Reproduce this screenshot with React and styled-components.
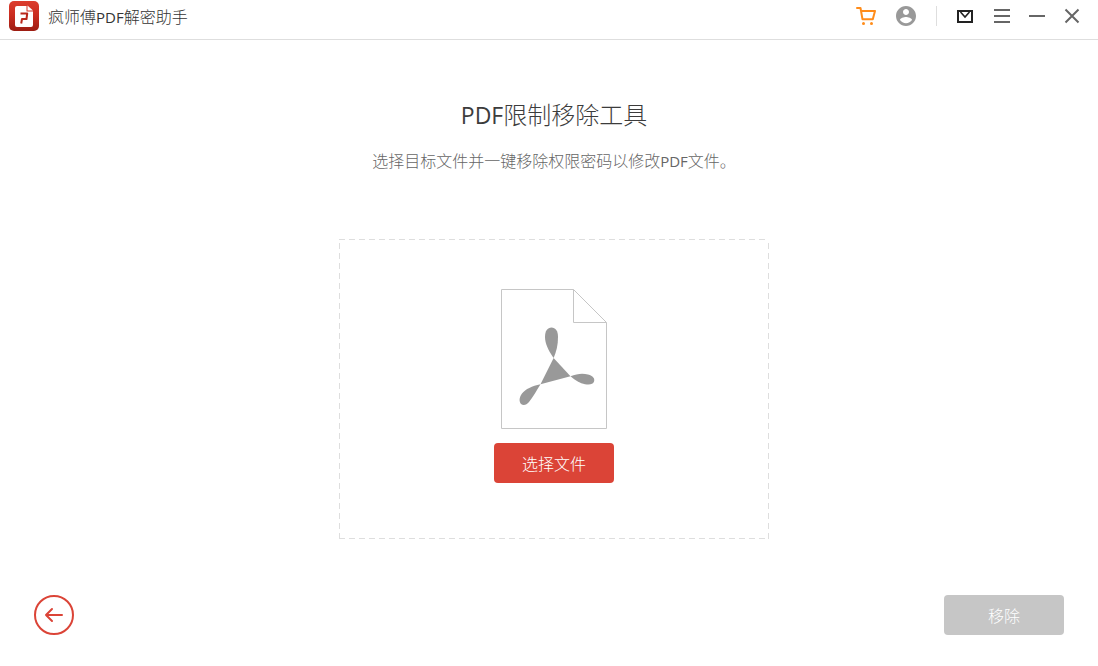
import React from 'react';
import styled, { createGlobalStyle } from 'styled-components'

const App = () => {
  return (
    <Window>
      <GlobalStyle />

      <Header>
        <Logo />
        <AppName>疯师傅<Latin>PDF</Latin>解密助手</AppName>

        <Actions>
          <IconButton aria-label="购物车"><CartIcon /></IconButton>
          <IconButton aria-label="账户"><UserIcon /></IconButton>
          <Divider />
          <WindowControls>
            <IconButton aria-label="反馈"><MailIcon /></IconButton>
            <IconButton aria-label="菜单"><MenuIcon /></IconButton>
            <IconButton aria-label="最小化"><MinimizeIcon /></IconButton>
            <IconButton aria-label="关闭"><CloseIcon /></IconButton>
          </WindowControls>
        </Actions>
      </Header>

      <Main>
        <Title><Latin $large>PDF</Latin>限制移除工具</Title>
        <Subtitle>选择目标文件并一键移除权限密码以修改<Latin>PDF</Latin>文件。</Subtitle>

        <DropZone>
          <PdfFileIcon />
          <Button $color="#db4437">选择文件</Button>
        </DropZone>
      </Main>

      <Footer>
        <BackButton aria-label="返回"><BackIcon /></BackButton>
        <Button $color="#c6c6c6" disabled>移除</Button>
      </Footer>
    </Window>
  );
}

export default App;


const Logo = () => (
  <svg width="30" height="30" viewBox="0 0 30 30" aria-hidden="true">
    <defs>
      <linearGradient id="logoFill" x1="0" y1="0" x2="0" y2="1">
        <stop offset="0" stopColor="#dc3d2e" />
        <stop offset="0.5" stopColor="#c92c1f" />
        <stop offset="1" stopColor="#9c1d12" />
      </linearGradient>
    </defs>
    <rect width="30" height="30" rx="5" fill="url(#logoFill)" />
    <path d="M8 5h9.500v5.500H24V24a2 2 0 0 1-2 2H8a2 2 0 0 1-2-2V7a2 2 0 0 1 2-2z" fill="#fff" />
    <path d="M18.500 4.500l5.500 5h-5.500z" fill="#fff" />
    <path d="M11.500 12.500h6.700l-.7 5.500h-4.500l-.8 4.500" fill="none" stroke="#b9281b" strokeWidth="2" strokeLinejoin="round" />
  </svg>
)

const CartIcon = () => (
  <svg width="20" height="20" viewBox="0 0 20 20" fill="none" stroke="#ff8c1a" strokeWidth="2" strokeLinecap="round" strokeLinejoin="round">
    <path d="M1 2h3.500l2 11.300h10.300L19 5H5.500" />
    <circle cx="7.500" cy="17.500" r="1.500" fill="#ff8c1a" stroke="none" />
    <circle cx="15.500" cy="17.500" r="1.500" fill="#ff8c1a" stroke="none" />
  </svg>
)

const UserIcon = () => (
  <svg width="20" height="20" viewBox="2 2 20 20" fill="#999">
    <path d="M12 2C6.480 2 2 6.480 2 12s4.480 10 10 10 10-4.480 10-10S17.520 2 12 2zm0 3c1.660 0 3 1.340 3 3s-1.340 3-3 3-3-1.340-3-3 1.340-3 3-3zm0 14.200c-2.500 0-4.710-1.280-6-3.220.03-1.990 4-3.080 6-3.080 1.990 0 5.970 1.090 6 3.080-1.290 1.940-3.500 3.220-6 3.220z" />
  </svg>
)

const MailIcon = () => (
  <svg width="20" height="20" viewBox="0 0 20 20" fill="none" stroke="#222" strokeWidth="2">
    <rect x="1" y="5" width="14" height="11" />
    <path d="M3.500 6l4.500 5 4.500-5" strokeWidth="1.600" />
  </svg>
)

const MenuIcon = () => (
  <svg width="20" height="20" viewBox="0 0 20 20" stroke="#666" strokeWidth="2">
    <path d="M2 4h16M2 10h16M2 16h16" />
  </svg>
)

const MinimizeIcon = () => (
  <svg width="20" height="20" viewBox="0 0 20 20" stroke="#666" strokeWidth="2">
    <path d="M2 10h16" />
  </svg>
)

const CloseIcon = () => (
  <svg width="20" height="20" viewBox="0 0 20 20" stroke="#666" strokeWidth="2">
    <path d="M3.500 3.500l13 13M16.500 3.500l-13 13" />
  </svg>
)

const PdfFileIcon = () => (
  <svg width="106" height="140" viewBox="0 0 106 140" aria-hidden="true">
    <path d="M72.500 .5H.5v139h105v-106zM72.500 .5v33h33" fill="none" stroke="#c6c6c6" />
    <g fill="#999">
      <path d="M52.600 69L69.500 87.200 39.500 95.200z" />
      <path d="M52.600 69C47 61 44 54 44 48c0-6 2.500-9.500 6.500-9.500S57 42 57 48c0 8-1.500 14-4.400 21z" />
      <path d="M69.500 87.200C76 84.500 82 84 87 85.500c5 1.500 7 4 6 7s-4.500 3.500-9 2.700c-5-1-9.500-3.500-14.500-8z" />
      <path d="M39.500 95.200C31 97 24.500 100 21 104.500c-3 4-3 8-1 10.500 2.500 2 5.500 1 8-2 4-5 7.500-11.500 11.500-17.800z" />
    </g>
  </svg>
)

const BackIcon = () => (
  <svg width="20" height="20" viewBox="0 0 20 20" fill="none" stroke="#db4437" strokeWidth="2" strokeLinecap="round" strokeLinejoin="round">
    <path d="M18 10H2M8 4l-6 6 6 6" />
  </svg>
)

const GlobalStyle = createGlobalStyle`
* {
  box-sizing:border-box;
}
body {
  margin:0;
  background-color:white;
  font-family:'Noto Sans CJK SC', sans-serif;
  font-weight:300;
  font-size:16px;
  line-height:24px;
}
`

const Window = styled.div`
display:flex;
flex-direction:column;
min-height:100vh;
`

const Header = styled.header`
display:flex;
align-items:center;
padding:1px 16px 8px 9px;
border-bottom:1px solid #dedede;
`

const AppName = styled.span`
margin-left:9px;
color:#333;
`

/* latin glyphs run wider than the chinese text around them */
const Latin = styled.span`
font-family:'Open Sans', sans-serif;
font-weight:400;
font-size:${props => props.$large ? '23px' : '15px'};
line-height:1;
`

const Actions = styled.div`
display:flex;
align-items:center;
gap:20px;
margin-left:auto;
`

const WindowControls = styled.div`
display:flex;
gap:15px;
`

const Divider = styled.div`
width:1px;
height:20px;
background-color:#dedede;
`

const IconButton = styled.button`
display:flex;
padding:0;
border:none;
background:none;
cursor:pointer;
`

const Main = styled.main`
display:flex;
flex-direction:column;
align-items:center;
padding:56px 0 56px 10px;
`

const Title = styled.h1`
margin:0 0 16px;
color:#3c3c3c;
font-size:24px;
font-weight:300;
line-height:36px;
`

const Subtitle = styled.p`
margin:0 0 67px;
color:#666;
`

const dash = 'transparent 0 4px, #dedede 4px 10px'

const DropZone = styled.section`
display:flex;
flex-direction:column;
align-items:center;
gap:14px;
width:100%;
max-width:430px;
padding:50px 20px 56px;
background:
  repeating-linear-gradient(to left, ${dash}) top / 100% 1px no-repeat,
  repeating-linear-gradient(to left, ${dash}) bottom / 100% 1px no-repeat,
  repeating-linear-gradient(to bottom, ${dash}) left / 1px 100% no-repeat,
  repeating-linear-gradient(to bottom, ${dash}) right / 1px 100% no-repeat;
`

const Button = styled.button`
width:120px;
height:40px;
padding:0;
border:none;
border-radius:4px;
background-color:${props => props.$color};
color:white;
font:inherit;
cursor:${props => props.disabled ? 'default' : 'pointer'};
`

const Footer = styled.footer`
display:flex;
align-items:center;
justify-content:space-between;
margin-top:auto;
padding:0 34px 31px;
`

const BackButton = styled.button`
display:flex;
align-items:center;
justify-content:center;
width:40px;
height:40px;
padding:0;
border:2px solid #db4437;
border-radius:50%;
background:none;
cursor:pointer;
`
